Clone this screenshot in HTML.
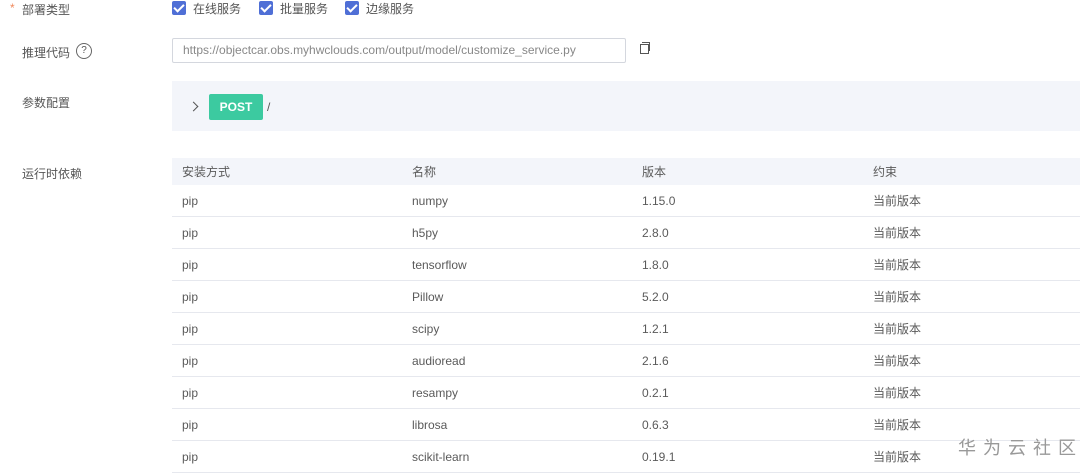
<!DOCTYPE html><html><head><meta charset="utf-8"><style>
body{margin:0;width:1080px;height:471px;background:#fff;font-family:"Liberation Sans","Noto Sans CJK SC",sans-serif;font-size:12px;color:#555;position:relative;overflow:hidden}
.a{position:absolute;white-space:nowrap}
.cb{position:absolute;top:1px;width:14px;height:14px;background:#4f6fd6;border-radius:2px}
.cb:after{content:"";position:absolute;left:4px;top:1px;width:4px;height:8px;border:solid #fff;border-width:0 2px 2px 0;transform:rotate(45deg)}
table{position:absolute;left:172px;top:158px;width:908px;border-collapse:collapse}
td{height:31px;border-bottom:1px solid #e6e8ee;padding:0 0 0 10px;color:#5a5a5a}
tr.h td{background:#f3f5fa;height:27px;border:none}
</style></head><body>
<div class="a" style="left:10px;top:1px;color:#f08a5d">*</div>
<div class="a" style="left:22px;top:1px">部署类型</div>
<div class="cb" style="left:172px"></div><div class="a" style="left:193px;top:0">在线服务</div>
<div class="cb" style="left:259px"></div><div class="a" style="left:280px;top:0">批量服务</div>
<div class="cb" style="left:345px"></div><div class="a" style="left:366px;top:0">边缘服务</div>
<div class="a" style="left:22px;top:44px">推理代码</div>
<div class="a" style="left:76px;top:43px;width:14px;height:14px;border:1px solid #666;border-radius:50%;font-size:10px;text-align:center;line-height:14px">?</div>
<div class="a" style="left:172px;top:38px;color:#888;line-height:23px;padding-left:10px;box-sizing:border-box;width:454px;height:25px;border:1px solid #d4d7de;border-radius:2px">https://objectcar.obs.myhwclouds.com/output/model/customize_service.py</div>
<div class="a" style="left:640px;top:44px;width:7px;height:8px;border:1px solid #555"></div>
<div class="a" style="left:642px;top:42px;width:7px;height:8px;border-top:1px solid #555;border-right:1px solid #555"></div>
<div class="a" style="left:22px;top:94px">参数配置</div>
<div class="a" style="left:172px;top:81px;width:908px;height:50px;background:#f3f5fa"></div>
<div class="a" style="left:190px;top:103px;width:6px;height:6px;border:solid #555;border-width:1.5px 1.5px 0 0;transform:rotate(45deg)"></div>
<div class="a" style="left:209px;top:94px;width:54px;height:26px;background:#3ccaa0;border-radius:2px;color:#fff;font-weight:bold;text-align:center;line-height:26px">POST</div>
<div class="a" style="left:267px;top:100px">/</div>
<div class="a" style="left:22px;top:165px">运行时依赖</div>
<table>
<tr class="h"><td style="width:220px">安装方式</td><td style="width:220px">名称</td><td style="width:221px">版本</td><td>约束</td></tr>
<tr><td>pip</td><td>numpy</td><td>1.15.0</td><td>当前版本</td></tr>
<tr><td>pip</td><td>h5py</td><td>2.8.0</td><td>当前版本</td></tr>
<tr><td>pip</td><td>tensorflow</td><td>1.8.0</td><td>当前版本</td></tr>
<tr><td>pip</td><td>Pillow</td><td>5.2.0</td><td>当前版本</td></tr>
<tr><td>pip</td><td>scipy</td><td>1.2.1</td><td>当前版本</td></tr>
<tr><td>pip</td><td>audioread</td><td>2.1.6</td><td>当前版本</td></tr>
<tr><td>pip</td><td>resampy</td><td>0.2.1</td><td>当前版本</td></tr>
<tr><td>pip</td><td>librosa</td><td>0.6.3</td><td>当前版本</td></tr>
<tr><td>pip</td><td>scikit-learn</td><td>0.19.1</td><td>当前版本</td></tr>
</table>
<div class="a" style="left:958px;top:434px;font-size:18px;color:#999;letter-spacing:7px">华为云社区</div>
</body></html>
